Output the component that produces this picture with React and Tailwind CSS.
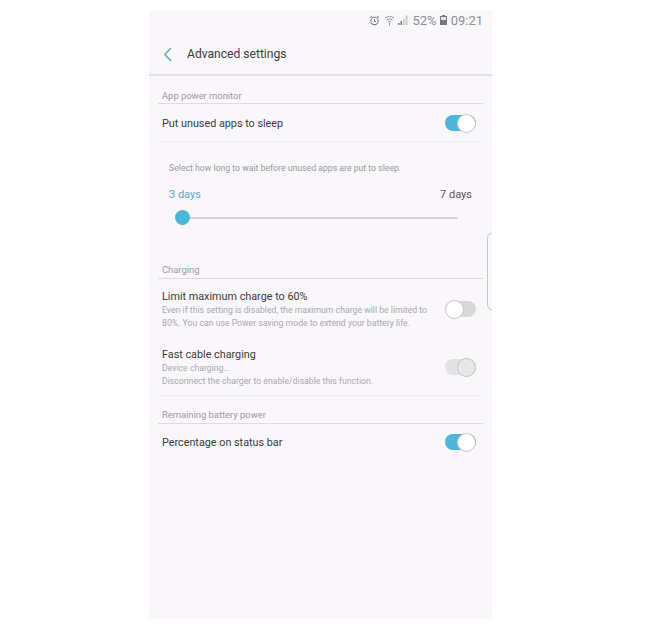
import React from 'react';

const Toggle = ({ on, disabled }) => {
  const track = disabled ? 'bg-[#e2e2e2]' : on ? 'bg-[#4db6d8]' : 'bg-[#d8d8d8]';
  const thumb = disabled ? 'bg-[#e8e8e8] border-[#c4c4c4]' : 'bg-white border-[#c9c9c9]';
  return (
    <div className="w-[31px] h-[19px] shrink-0 flex items-center">
      <div className={`w-[31px] h-[16px] rounded-full flex items-center ${on ? 'justify-end' : 'justify-start'} ${track}`}>
        <div className={`w-[19px] h-[19px] rounded-full border ${thumb}`}></div>
      </div>
    </div>
  );
};

const SectionTitle = ({ children, className }) => (
  <div className={`mx-[9px] pl-[4px] border-b border-[#dcdbe0] text-[9.4px] leading-[13px] text-[#9b9a9f] ${className}`}>
    {children}
  </div>
);

const StatusBar = () => (
  <div className="h-[20px] flex items-center justify-end gap-[4px] pr-[9px] text-[#8f8f94]">
    <svg width="11" height="11" viewBox="0 0 12 12" fill="none" stroke="#77777c" strokeWidth="1.1">
      <circle cx="6" cy="6.5" r="4" />
      <path d="M6 4.5V6.7L7.5 7.6M1 3L3 1.2M11 3L9 1.2" />
    </svg>
    <svg width="11" height="11" viewBox="0 0 12 12" fill="none" stroke="#8a8a8f" strokeWidth="1">
      <path d="M1 3.5C4 1 8 1 11 3.5M2.8 5.5C4.8 4 7.2 4 9.2 5.5M4.5 7.3C5.5 6.6 6.5 6.6 7.5 7.3M6 8V11.5" />
    </svg>
    <svg width="10" height="10" viewBox="0 0 10 10" className="-ml-[1px]">
      <path d="M0 10H1.5V8H0ZM2.5 10H4V6H2.5Z" fill="#77777c" />
      <path d="M5 10H6.5V4H5ZM7.5 10H9.5V0.5H7.5Z" fill="#c8c8cc" />
    </svg>
    <span className="text-[13px] leading-none">52%</span>
    <svg width="7" height="10" viewBox="0 0 7 10" className="-ml-[1px]">
      <path d="M2 0H5V1H7V10H0V1H2Z" fill="#77777c" />
      <path d="M1 2H6V5H1Z" fill="#e4e4e8" />
    </svg>
    <span className="text-[13px] leading-none">09:21</span>
  </div>
);

const App = () => {
  return (
    <div className="min-h-[625px] bg-white pt-[10px] pl-[149px] font-['Roboto',sans-serif]">
      <div className="relative w-[343px] h-[609px] bg-[#f9f7fa]">
        <StatusBar />

        <div className="h-[46px] pt-[4px] flex items-center border-b-2 border-[#e2e1e6]">
          <svg width="10" height="15" viewBox="0 0 10 15" fill="none" stroke="#5fa8b4" strokeWidth="1.4" className="ml-[14px]">
            <path d="M8 1L1.8 7.5L8 14" />
          </svg>
          <span className="ml-[14px] text-[12.1px] text-[#3a3a3d]">Advanced settings</span>
        </div>

        <SectionTitle className="mt-[13px] h-[15px]">App power monitor</SectionTitle>
        <div className="mx-[9px] pl-[4px] pr-[7px] pt-[1px] h-[38px] flex items-center justify-between border-b border-[#efeef2]">
          <span className="mt-[2px] text-[10.8px] text-[#3a3a3d]">Put unused apps to sleep</span>
          <Toggle on />
        </div>

        <div className="px-[20px] pt-[20px] h-[121px]">
          <p className="text-[8.7px] leading-[13px] text-[#9b9a9f]">Select how long to wait before unused apps are put to sleep.</p>
          <div className="mt-[13px] flex justify-between text-[11px] leading-[14px]">
            <span className="text-[#55a9c4]">3 days</span>
            <span className="text-[#55555a]">7 days</span>
          </div>
          <div className="mt-[8px] ml-[6px] mr-[14px] flex items-center">
            <div className="w-[15px] h-[15px] rounded-full bg-[#4db6d8] shrink-0"></div>
            <div className="flex-1 h-[2px] bg-[#d4d3d8]"></div>
          </div>
        </div>

        <SectionTitle className="h-[16px]">Charging</SectionTitle>
        <div className="mx-[9px] pl-[4px] pr-[7px] pt-[2px] h-[58px] flex items-center justify-between">
          <div>
            <div className="text-[10.8px] leading-[15px] text-[#3a3a3d]">Limit maximum charge to 60%</div>
            <div className="w-[272px] text-[8.7px] leading-[13px] text-[#a9a8ad]">
              Even if this setting is disabled, the maximum charge will be limited to 80%. You can use Power saving mode to extend your battery life.
            </div>
          </div>
          <Toggle />
        </div>
        <div className="mx-[9px] pl-[4px] pr-[7px] pt-[2px] h-[59px] flex items-center justify-between border-b border-[#efeef2]">
          <div>
            <div className="text-[10.8px] leading-[15px] text-[#3a3a3d]">Fast cable charging</div>
            <div className="text-[8.7px] leading-[13px] text-[#a9a8ad]">Device charging...</div>
            <div className="text-[8.7px] leading-[13px] text-[#a9a8ad]">Disconnect the charger to enable/disable this function.</div>
          </div>
          <Toggle on disabled />
        </div>

        <SectionTitle className="mt-[12px] h-[16px]">Remaining battery power</SectionTitle>
        <div className="mx-[9px] pl-[4px] pr-[7px] h-[36px] flex items-center justify-between">
          <span className="mt-[2px] text-[10.8px] text-[#3a3a3d]">Percentage on status bar</span>
          <Toggle on />
        </div>

        <div className="absolute right-0 top-[223px] w-[5px] h-[77px] rounded-l-[5px] border border-r-0 border-[#c9c8cd]"></div>
      </div>
    </div>
  );
};

export default App;
